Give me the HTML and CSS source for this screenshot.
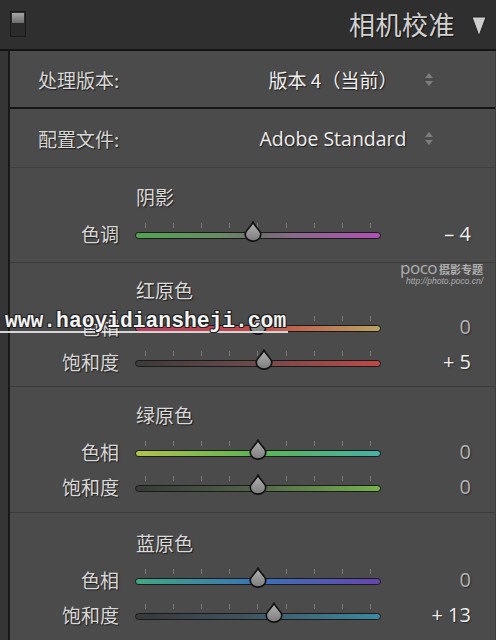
FILE: index.html
```html
<!DOCTYPE html>
<html lang="zh">
<head>
<meta charset="utf-8">
<title>相机校准</title>
<link rel="stylesheet" href="styles.css">
</head>
<body>
<div class="app">
  <header class="header">
    <div class="toggle"><div class="toggle-top"></div></div>
    <h1 class="title">相机校准</h1>
    <svg class="collapse" width="16" height="21" viewBox="0 0 16 21"><polygon points="1,1 15,1 8,20" fill="#cdcdcd" stroke="#222" stroke-width="1"/></svg>
  </header>
  <main class="panel">
    <div class="setting setting-first">
      <span class="setting-label">处理版本:</span>
      <span class="setting-value">版本 4（当前）</span>
      <svg class="spinner" width="8" height="13" viewBox="0 0 8 13"><polygon points="4,0 8,5 0,5" fill="#7d7d7d"/><polygon points="0,8 8,8 4,13" fill="#7d7d7d"/></svg>
    </div>
    <div class="setting setting-second">
      <span class="setting-label">配置文件:</span>
      <span class="setting-value latin">Adobe Standard</span>
      <svg class="spinner" width="8" height="13" viewBox="0 0 8 13"><polygon points="4,0 8,5 0,5" fill="#7d7d7d"/><polygon points="0,8 8,8 4,13" fill="#7d7d7d"/></svg>
    </div>

    <section class="group group-shadow">
      <div class="group-title">阴影</div>
      <div class="slider-row">
        <span class="slider-label">色调</span>
        <div class="track tint"><svg class="thumb" style="left:48%" width="19" height="21" viewBox="0 0 19 21"><defs><linearGradient id="tg1" x1="0" y1="0" x2="0" y2="1"><stop offset="0" stop-color="#b4b4b4"/><stop offset="1" stop-color="#7c7c7c"/></linearGradient></defs><path d="M9.5 1.2 C11.2 5.5 17.3 9.5 17.3 13.3 A7.8 6.8 0 0 1 1.7 13.3 C1.7 9.5 7.8 5.5 9.5 1.2 Z" fill="url(#tg1)" stroke="#111" stroke-width="1.7"/></svg></div>
        <span class="slider-value bright">– 4</span>
      </div>
    </section>

    <section class="group group-red">
      <div class="group-title">红原色</div>
      <div class="slider-row">
        <span class="slider-label">色相</span>
        <div class="track red-hue"><svg class="thumb" style="left:50%" width="19" height="21" viewBox="0 0 19 21"><path d="M9.5 1.2 C11.2 5.5 17.3 9.5 17.3 13.3 A7.8 6.8 0 0 1 1.7 13.3 C1.7 9.5 7.8 5.5 9.5 1.2 Z" fill="url(#tg1)" stroke="#111" stroke-width="1.7"/></svg></div>
        <span class="slider-value">0</span>
      </div>
      <div class="slider-row">
        <span class="slider-label">饱和度</span>
        <div class="track red-sat"><svg class="thumb" style="left:52.5%" width="19" height="21" viewBox="0 0 19 21"><path d="M9.5 1.2 C11.2 5.5 17.3 9.5 17.3 13.3 A7.8 6.8 0 0 1 1.7 13.3 C1.7 9.5 7.8 5.5 9.5 1.2 Z" fill="url(#tg1)" stroke="#111" stroke-width="1.7"/></svg></div>
        <span class="slider-value bright">+ 5</span>
      </div>
    </section>

    <section class="group group-green">
      <div class="group-title">绿原色</div>
      <div class="slider-row">
        <span class="slider-label">色相</span>
        <div class="track green-hue"><svg class="thumb" style="left:50%" width="19" height="21" viewBox="0 0 19 21"><path d="M9.5 1.2 C11.2 5.5 17.3 9.5 17.3 13.3 A7.8 6.8 0 0 1 1.7 13.3 C1.7 9.5 7.8 5.5 9.5 1.2 Z" fill="url(#tg1)" stroke="#111" stroke-width="1.7"/></svg></div>
        <span class="slider-value">0</span>
      </div>
      <div class="slider-row">
        <span class="slider-label">饱和度</span>
        <div class="track green-sat"><svg class="thumb" style="left:50%" width="19" height="21" viewBox="0 0 19 21"><path d="M9.5 1.2 C11.2 5.5 17.3 9.5 17.3 13.3 A7.8 6.8 0 0 1 1.7 13.3 C1.7 9.5 7.8 5.5 9.5 1.2 Z" fill="url(#tg1)" stroke="#111" stroke-width="1.7"/></svg></div>
        <span class="slider-value">0</span>
      </div>
    </section>

    <section class="group group-blue">
      <div class="group-title">蓝原色</div>
      <div class="slider-row">
        <span class="slider-label">色相</span>
        <div class="track blue-hue"><svg class="thumb" style="left:50%" width="19" height="21" viewBox="0 0 19 21"><path d="M9.5 1.2 C11.2 5.5 17.3 9.5 17.3 13.3 A7.8 6.8 0 0 1 1.7 13.3 C1.7 9.5 7.8 5.5 9.5 1.2 Z" fill="url(#tg1)" stroke="#111" stroke-width="1.7"/></svg></div>
        <span class="slider-value">0</span>
      </div>
      <div class="slider-row">
        <span class="slider-label">饱和度</span>
        <div class="track blue-sat"><svg class="thumb" style="left:56.5%" width="19" height="21" viewBox="0 0 19 21"><path d="M9.5 1.2 C11.2 5.5 17.3 9.5 17.3 13.3 A7.8 6.8 0 0 1 1.7 13.3 C1.7 9.5 7.8 5.5 9.5 1.2 Z" fill="url(#tg1)" stroke="#111" stroke-width="1.7"/></svg></div>
        <span class="slider-value bright">+ 13</span>
      </div>
    </section>
  </main>

  <div class="poco">
    <div class="poco-top"><span class="poco-word">poco</span><span class="poco-cn">摄影专题</span></div>
    <div class="poco-url">http://photo.poco.cn/</div>
  </div>
  <div class="site-mark">www.haoyidiansheji.com</div>
</div>
</body>
</html>
```

FILE: styles.css
```css
* { box-sizing: border-box; margin: 0; padding: 0; }

html, body {
  width: 496px;
  height: 640px;
  overflow: hidden;
  background: #353535;
}

body {
  font-family: "Noto Sans CJK SC", "Open Sans", sans-serif;
  color: #d6d6d6;
}

.app {
  position: relative;
  width: 496px;
  height: 640px;
  display: flex;
  flex-direction: column;
}

/* Header */
.header {
  height: 51px;
  flex: none;
  display: flex;
  align-items: center;
  padding: 0 9px 2px 10px;
  background: #2f2f2f;
  border-bottom: 2px solid #141414;
}

.toggle {
  width: 16px;
  height: 26px;
  border: 1px solid #1a1a1a;
  background: #2b2b2b;
  padding: 1px;
}

.toggle-top {
  height: 10px;
  background: linear-gradient(#a4a4a4, #6c6c6c);
}

.title {
  margin-left: auto;
  font-size: 26px;
  font-weight: 400;
  line-height: 30px;
  color: #d2d2d2;
  letter-spacing: 0.5px;
  text-shadow: 1px 1px 1px #111;
}

.collapse {
  margin-left: 16px;
  margin-top: 5px;
  display: block;
}

/* Panel */
.panel {
  flex: 1;
  margin-left: 8px;
  background: #4b4b4b;
  border-left: 2px solid #181818;
  border-right: 1px solid #3d3d3d;
  display: flex;
  flex-direction: column;
}

.setting {
  display: flex;
  align-items: center;
  padding-left: 28px;
  font-size: 19px;
  text-shadow: 1px 1px 1px #1c1c1c;
  flex: none;
}

.setting-first {
  height: 58px;
  border-bottom: 2px solid #151515;
}

.setting-second {
  height: 59px;
  border-bottom: 1px solid #3f3f3f;
}

.setting-label {
  width: 204px;
  color: #d8d8d8;
}

.setting-value {
  width: 182px;
  text-align: center;
  color: #efefef;
}

.latin {
  font-family: "Open Sans", "Noto Sans", sans-serif;
  font-size: 19.5px;
}

.spinner {
  display: block;
  margin-left: 1px;
}

/* Groups */
.group {
  flex: none;
  border-top: 1px solid #3c3c3c;
}

.group-shadow { height: 94px; padding-top: 16px; border-top: 0; }
.group-red { height: 124px; padding-top: 14px; }
.group-green { height: 126px; padding-top: 15px; }
.group-blue { height: 128px; padding-top: 17px; }

.group-title {
  height: 26px;
  line-height: 26px;
  margin-left: 126px;
  margin-bottom: 6px;
  font-size: 19px;
  color: #dadada;
  text-shadow: 1px 1px 1px #1c1c1c;
}

.slider-row {
  height: 35px;
  display: grid;
  grid-template-columns: 109px 246px 1fr;
  column-gap: 16px;
  align-items: center;
  padding-right: 24px;
}

.slider-label {
  text-align: right;
  font-size: 19px;
  color: #d8d8d8;
  text-shadow: 1px 1px 1px #1c1c1c;
}

.slider-value {
  text-align: right;
  font-family: "Open Sans", "Noto Sans", sans-serif;
  font-size: 20px;
  color: #b4b4b4;
  text-shadow: 1px 1px 1px #2a2a2a;
}

.slider-value.bright {
  color: #f0f0f0;
}

.track {
  position: relative;
  height: 7px;
  border-radius: 4px;
  border: 1px solid #1a1a1a;
  margin-top: 3px;
}

.track::before {
  content: "";
  position: absolute;
  left: 9px;
  top: -10px;
  width: 227px;
  height: 5px;
  background: repeating-linear-gradient(to right, #8c8c8c 0 1px, transparent 1px 28.125px);
  opacity: 0.7;
}

.thumb {
  position: absolute;
  top: -12px;
  transform: translateX(-50%);
  display: block;
}

.tint { background: linear-gradient(to right, #52a452, #6b8a66 35%, #6e6e6e 50%, #8a6a8c 65%, #b050b4); }
.red-hue { background: linear-gradient(to right, #b8405e, #c24848 50%, #b8a460); }
.red-sat { background: linear-gradient(to right, #3a3a3a, #6a4a4a 45%, #c04848); }
.green-hue { background: linear-gradient(to right, #b0c44a, #5cb454 50%, #46b0a4); }
.green-sat { background: linear-gradient(to right, #383838, #506048 45%, #74b44c); }
.blue-hue { background: linear-gradient(to right, #3fa882, #3a72b8 50%, #6644b0); }
.blue-sat { background: linear-gradient(to right, #383838, #3f5460 45%, #3a8aa4); }

/* Watermarks (overlay) */
.poco {
  position: absolute;
  left: 400px;
  top: 259px;
  color: rgba(210, 210, 210, 0.75);
  line-height: 1;
}

.poco-top {
  display: flex;
  align-items: baseline;
  height: 17px;
}

.poco-word {
  font-family: "Open Sans", sans-serif;
  font-size: 17px;
  letter-spacing: -0.5px;
}

.poco-cn {
  font-size: 11px;
  font-weight: 700;
  margin-left: 2px;
}

.poco-url {
  font-family: "Liberation Sans", sans-serif;
  font-size: 8.5px;
  margin-left: 6px;
  margin-top: 1px;
  font-style: italic;
}

.site-mark {
  position: absolute;
  left: 0;
  top: 311px;
  width: 288px;
  padding-left: 5px;
  font-family: "Liberation Mono", monospace;
  font-weight: 700;
  font-size: 21.3px;
  line-height: 20px;
  height: 22px;
  color: #f4f4f4;
  border-bottom: 2px solid rgba(240, 240, 240, 0.85);
  text-shadow: -1px -1px 0 #222, 1px -1px 0 #222, -1px 1px 0 #222, 1px 1px 0 #222;
  white-space: nowrap;
}
```
